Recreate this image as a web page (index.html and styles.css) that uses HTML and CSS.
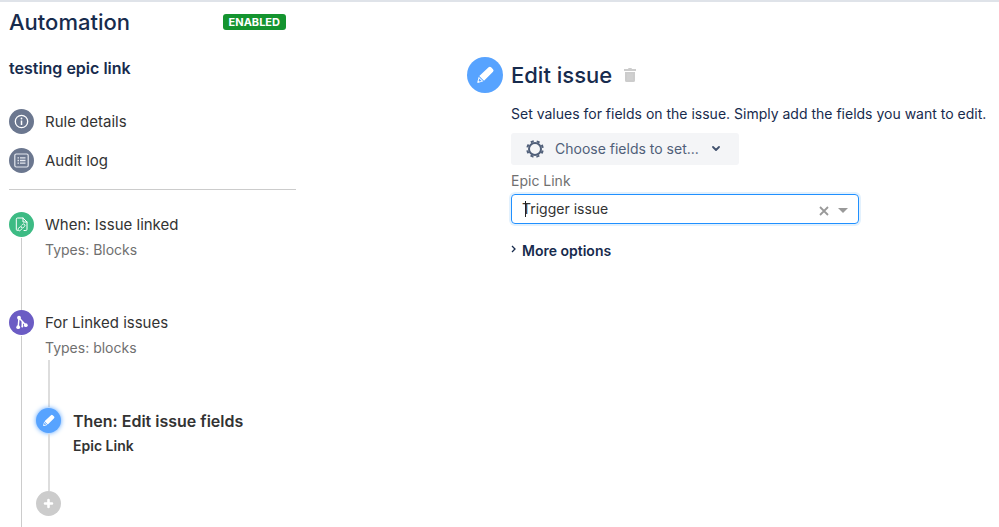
FILE: index.html
```html
<!DOCTYPE html>
<html lang="en">
<head>
<meta charset="utf-8">
<title>Automation</title>
<link rel="stylesheet" href="styles.css">
</head>
<body>
<div class="page">
  <aside class="sidebar">
    <header class="sidebar-head">
      <h1>Automation</h1>
      <span class="badge">ENABLED</span>
    </header>
    <h2 class="rule-name">testing epic link</h2>
    <nav class="links">
      <a href="#details">
        <svg class="dot slate" viewBox="0 0 25 25" aria-hidden="true"><circle cx="12.500" cy="12.500" r="6.200" fill="none" stroke="#fff" stroke-width="1.300"/><path d="M12.500 11.500v4.500" stroke="#fff" stroke-width="1.500"/><circle cx="12.500" cy="9.500" r=".9" fill="#fff"/></svg>
        Rule details
      </a>
      <a href="#log">
        <svg class="dot slate" viewBox="0 0 25 25" aria-hidden="true"><rect x="5.800" y="6" width="13.400" height="13" rx="1.500" fill="none" stroke="#e4e8ef" stroke-width="1.200"/><path d="M8.500 9.800h1.500M11 9.800h5.500M8.500 12.500h1.500M11 12.500h5.500M8.500 15.200h1.500M11 15.200h5.500" stroke="#e4e8ef" stroke-width="1.300"/></svg>
        Audit log
      </a>
    </nav>
    <ol class="steps">
      <li class="step">
        <div class="rail">
          <svg class="dot green" viewBox="0 0 25 25" aria-hidden="true"><g fill="none" stroke="#fff" stroke-width="1" stroke-linecap="round" stroke-linejoin="round"><path d="M9 18.500H8.500a1.200 1.200 0 0 1-1.200-1.200V7.200A1.200 1.200 0 0 1 8.500 6H14l4 4v7.300a1.200 1.200 0 0 1-1.200 1.200H15M14 6v4h4"/><path d="M12.700 13.200l.8-.8a1.400 1.400 0 0 1 2 2l-1.300 1.300a1.400 1.400 0 0 1-1.800.1M12.600 14.900a1.400 1.400 0 0 0-1.800.1l-1.300 1.300a1.400 1.400 0 0 0 2 2l.9-.9"/></g></svg>
          <span class="line"></span>
        </div>
        <div class="content">
          <div class="text"><h3>When: Issue linked</h3><p>Types: Blocks</p></div>
        </div>
      </li>
      <li class="step">
        <div class="rail">
          <svg class="dot purple" viewBox="0 0 25 25" aria-hidden="true"><path d="M9.200 17.200L10 7.800l6.800 7.400M13.300 11.500v4.300" fill="none" stroke="#fff" stroke-width="1.500" stroke-linecap="round"/><g fill="#fff"><circle cx="10" cy="7.700" r="1.900"/><circle cx="9.200" cy="17.200" r="1.900"/><circle cx="16.800" cy="15.200" r="1.900"/><circle cx="13.300" cy="16.500" r="1"/></g></svg>
          <span class="line"></span>
        </div>
        <div class="content">
          <div class="text"><h3>For Linked issues</h3><p>Types: blocks</p></div>
          <ol class="branch">
            <li class="lead"><span class="line"></span></li>
            <li class="step active">
              <div class="rail">
                <svg class="dot blue" viewBox="0 0 36 36" aria-hidden="true"><use href="#pencil"/></svg>
                <span class="line"></span>
              </div>
              <div class="content">
                <div class="text"><h3>Then: Edit issue fields</h3><p>Epic Link</p></div>
              </div>
            </li>
            <li>
              <button class="add" aria-label="Add component"><svg class="dot gray" viewBox="0 0 25 25" aria-hidden="true"><path d="M12.500 9v7M9 12.500h7" stroke="#fff" stroke-width="2.600" stroke-linecap="round"/></svg></button>
            </li>
          </ol>
        </div>
      </li>
    </ol>
  </aside>

  <main class="editor">
    <svg class="avatar blue" viewBox="0 0 36 36" aria-hidden="true"><g id="pencil" fill="#fff"><path d="M12.300 19L21.600 10.300a1.800 1.800 0 0 1 2.500 0l1.900 1.900a1.800 1.800 0 0 1 0 2.500L17 23.700z"/><path d="M11.700 19.700l4.600 4.600-4.800 1.500a.9.900 0 0 1-1.100-1.100z"/><path d="M12.200 21.400l2.500 2.500-2.300.7-.8-.8z" fill="#57a3ff"/></g></svg>
    <div class="panel">
      <header class="panel-head">
        <h2>Edit issue</h2>
        <button class="trash" aria-label="Delete"><svg viewBox="0 0 12 14" aria-hidden="true"><path d="M4.300 0h3.400v1H12v2H0V1h4.300zM1 4h10v8.500A1.500 1.500 0 0 1 9.500 14h-7A1.500 1.500 0 0 1 1 12.500z" fill="#ccc"/><path d="M4 5.500v6.500M6 5.500v6.500M8 5.500v6.500" stroke="#dadada" stroke-width=".6"/></svg></button>
      </header>
      <p class="intro">Set values for fields on the issue. Simply add the fields you want to edit.</p>
      <button class="choose">
        <svg class="gear" viewBox="0 0 18 18" aria-hidden="true"><circle cx="9" cy="9" r="6" fill="none" stroke="#505f79" stroke-width="2"/><circle cx="9" cy="9" r="7.800" fill="none" stroke="#505f79" stroke-width="2" stroke-dasharray="3.100 3.026" stroke-dashoffset="-1.500"/></svg>
        <span>Choose fields to set...</span>
        <svg class="chevron" viewBox="0 0 8 6" aria-hidden="true"><path d="M1 1l3 3 3-3" fill="none" stroke="#42526e" stroke-width="1.800" stroke-linecap="round" stroke-linejoin="round"/></svg>
      </button>
      <label class="field-label" for="epic">Epic Link</label>
      <div class="combo">
        <span class="caret"></span>
        <input id="epic" type="text" value="Trigger issue">
        <button class="clear" aria-label="Clear"><svg viewBox="0 0 10 10" aria-hidden="true"><path d="M1 1l8 8M9 1L1 9" stroke="#999" stroke-width="1.800"/></svg></button>
        <button class="open" aria-label="Open list"><svg viewBox="0 0 10 5" aria-hidden="true"><path d="M0 0h10L5 5z" fill="#999"/></svg></button>
      </div>
      <button class="more"><svg viewBox="0 0 5 8" aria-hidden="true"><path d="M1 1l3 3-3 3" fill="none" stroke="#172b4d" stroke-width="1.300"/></svg>More options</button>
    </div>
  </main>
</div>
</body>
</html>
```
FILE: styles.css
```css
* { box-sizing: border-box; }
body {
  margin: 0;
  background: #fff;
  color: #172b4d;
  font: 14px/20px Inter, "Liberation Sans", sans-serif;
}
h1, h2, h3, p, ol { margin: 0; padding: 0; }
ol { list-style: none; }
button { border: 0; padding: 0; background: none; font: inherit; color: inherit; }
svg { display: block; flex: none; }

.page {
  display: flex;
  min-height: 100vh;
  border-top: 2px solid #dfe3e9;
}

.sidebar {
  display: flex;
  flex-direction: column;
  flex: 0 0 296px;
  padding-left: 9px;
}
.sidebar-head {
  display: flex;
  align-items: center;
  justify-content: space-between;
  height: 40px;
  padding-right: 10px;
}
h1 { font-size: 22px; font-weight: 500; line-height: 28px; }
.badge {
  padding: 0 6px;
  border-radius: 3px;
  background: #14942f;
  color: #fff;
  font-size: 11px;
  font-weight: 700;
  line-height: 16px;
}
.rule-name { margin-top: 16px; font-size: 16px; font-weight: 600; }
.links {
  display: flex;
  flex-direction: column;
  gap: 14px;
  margin-top: 31px;
  padding-bottom: 16px;
  border-bottom: 1px solid #ccc;
}
.links a {
  display: flex;
  align-items: center;
  gap: 11px;
  color: #333;
  font-size: 15px;
  text-decoration: none;
}

.dot { width: 25px; height: 25px; border-radius: 50%; }
.slate { background: #6b778f; }
.green { background: #3dbb84; }
.purple { background: #6b5cc4; }
.blue { background: #57a3ff; }
.gray { background: #ccc; }

.steps { display: flex; flex-direction: column; flex: 1; margin-top: 22px; }
.step { display: flex; min-height: 98px; }
.steps > .step:last-child { flex: 1; }
.rail { display: flex; flex-direction: column; align-items: center; gap: 1px; }
.line { flex: 1; width: 1px; background: #ccc; }
.text { padding-left: 11px; color: #333; }
.text h3 { font-size: 15px; font-weight: 400; line-height: 26px; }
.text p { color: #707070; line-height: 24px; }

.branch { padding-left: 2px; }
.branch .line { width: 2px; background: #ddd; }
.lead {
  display: flex;
  flex-direction: column;
  align-items: center;
  width: 25px;
  height: 48px;
  padding-bottom: 1px;
}
.branch .step { min-height: 83px; }
.branch .text { padding-left: 12px; }
.active .dot { box-shadow: 0 0 5px #57a3ff; }
.active .text h3 { font-size: 16px; font-weight: 600; }
.active .text p { color: #333; font-weight: 600; }

.editor { display: flex; flex: 1; gap: 8px; padding: 55px 8px 0 171px; }
.avatar { width: 36px; height: 36px; border-radius: 50%; }
.panel { flex: 1; }
.panel-head { display: flex; align-items: center; gap: 12px; height: 36px; }
.panel-head h2 { font-size: 22px; font-weight: 500; line-height: 28px; }
.trash svg { width: 12px; height: 14px; }
.intro { margin-top: 11px; }
.choose {
  display: flex;
  align-items: center;
  gap: 11px;
  height: 32px;
  margin-top: 9px;
  padding: 0 19px 0 15px;
  border-radius: 3px;
  background: #f4f5f7;
  color: #505f79;
}
.gear { width: 18px; height: 18px; }
.chevron { width: 8px; height: 6px; margin-left: 2px; }
.field-label { display: block; margin-top: 6px; color: #707070; }
.combo {
  display: flex;
  align-items: center;
  position: relative;
  max-width: 348px;
  height: 30px;
  margin-top: 3px;
  padding: 0 10px;
  border: 1px solid #2090ff;
  border-radius: 4px;
  box-shadow: 0 0 0 2px #e3f1fd;
}
.combo input {
  flex: 1;
  min-width: 0;
  padding: 0;
  border: 0;
  outline: 0;
  background: none;
  color: #333;
  font: inherit;
}
.caret { position: absolute; left: 13px; width: 1px; height: 16px; background: #222; }
.clear, .open { margin-top: 3px; }
.clear svg { width: 10px; height: 10px; }
.open { margin-left: 9px; }
.open svg { width: 10px; height: 5px; }
.more { display: flex; align-items: center; gap: 6px; margin-top: 17px; font-weight: 600; }
.more svg { width: 5px; height: 8px; margin-bottom: 4px; }
```
